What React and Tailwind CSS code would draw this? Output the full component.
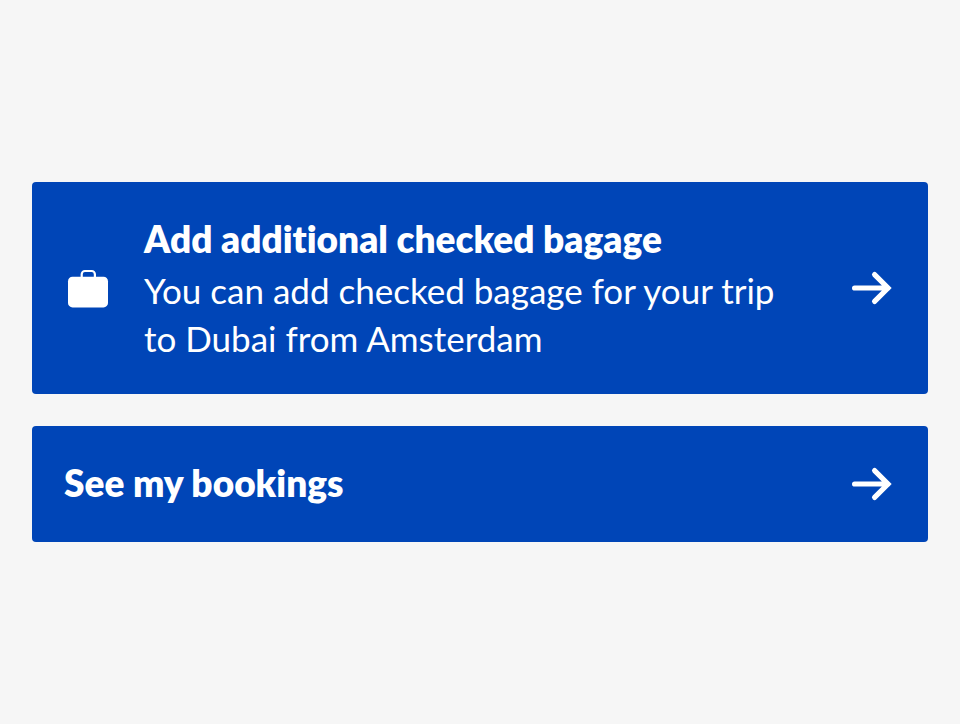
function BagageIcon() {
  return (
    <svg viewBox="0 0 48 48" fill="none" className="size-12 shrink-0" aria-hidden="true">
      <rect x="4" y="12.700" width="40" height="30.700" rx="4.500" fill="currentColor" />
      <path
        d="M17.700 14V10.200A3.200 3.200 0 0 1 20.900 7H27.700A3.200 3.200 0 0 1 30.900 10.200V14"
        stroke="currentColor"
        strokeWidth="2.200"
      />
    </svg>
  )
}

function ArrowIcon() {
  return (
    <svg viewBox="0 0 48 48" fill="none" className="size-12 shrink-0" aria-hidden="true">
      <path
        d="M6.600 24H40M26.600 10.600L40 24L26.600 37.400"
        stroke="currentColor"
        strokeWidth="5.200"
        strokeLinecap="round"
      />
    </svg>
  )
}

function CallToAction({ icon, title, children }) {
  return (
    <a
      href="#"
      className="flex items-center gap-8 rounded bg-[#0045b7] p-8 text-white hover:bg-[#003a9b]"
    >
      {icon}
      <div className="min-w-0 flex-1 pr-4">
        <h2 className="pb-0.5 text-[37px] leading-[50px] font-extrabold [font-variant-ligatures:none]">{title}</h2>
        {children && <p className="text-[35px] leading-[48px]">{children}</p>}
      </div>
      <ArrowIcon />
    </a>
  )
}

export default function App() {
  return (
    <main className="flex min-h-screen flex-col justify-center gap-8 bg-[#f6f6f6] p-8 font-['Lato',sans-serif]">
      <CallToAction icon={<BagageIcon />} title="Add additional checked bagage">
        You can add checked bagage for your trip to Dubai from Amsterdam
      </CallToAction>
      <CallToAction title="See my bookings" />
    </main>
  )
}
